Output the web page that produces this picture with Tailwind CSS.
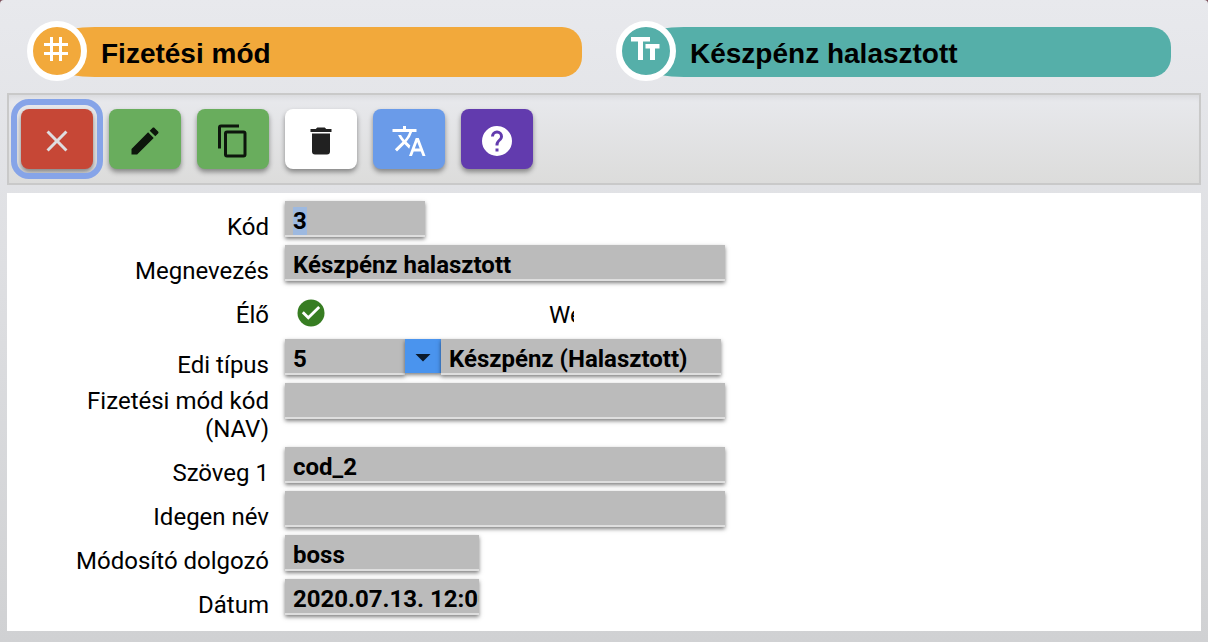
<!DOCTYPE html>
<html lang="hu">
  <head>
    <meta charset="UTF-8" />
    <meta name="viewport" content="width=device-width, initial-scale=1.0" />
    <script src="https://cdn.jsdelivr.net/npm/@tailwindcss/browser@4"></script>
    <title>Fizetési mód</title>
  </head>
  <body class="bg-[#7b4f5a] font-[Roboto,sans-serif] text-2xl/7 text-black">
    <div class="flex flex-col min-h-screen rounded-t-sm pb-[11px] bg-linear-to-b from-[#e8e9ed] to-[#d0d1d3]">
      <header class="grid grid-cols-2 gap-[34px] pl-[27px] pr-[37px] pt-[21px] pb-3 font-['Liberation_Sans',sans-serif]">
        <div class="grid">
          <h1 class="col-start-1 row-start-1 flex items-center h-[50px] mt-1.5 ml-1 pl-[70px] pt-1 bg-[#f2a93b] [border-radius:64px_20px_20px_64px/25px_20px_20px_25px] text-[28px] font-bold">
            Fizetési mód
          </h1>
          <div class="col-start-1 row-start-1 flex justify-center size-15 pt-2.5 pr-0.5 rounded-full border-6 border-white bg-[#f2a93b]">
            <svg class="size-6" viewBox="0 0 24 24" stroke="#fff" stroke-width="3" fill="none">
              <path d="M7.5 0V24M16.5 0V24M0 7.5H24M0 16.5H24" />
            </svg>
          </div>
        </div>
        <div class="grid">
          <h2 class="col-start-1 row-start-1 flex items-center h-[50px] mt-1.5 ml-1 pl-[70px] pt-1 bg-[#55afa9] [border-radius:64px_20px_20px_64px/25px_20px_20px_25px] text-[28px] font-bold">
            Készpénz halasztott
          </h2>
          <div class="col-start-1 row-start-1 flex justify-center size-15 pt-2.5 pr-0.5 rounded-full border-6 border-white bg-[#55afa9]">
            <svg class="w-[29px] h-[23px]" viewBox="0 0 29 23" fill="#fff">
              <path d="M0 0H19V4.5H12V23H7V4.5H0ZM14.5 7H28.5V11.5H24V23H19V11.5H14.5Z" />
            </svg>
          </div>
        </div>
      </header>

      <div class="flex gap-4 mx-[7px] px-3 py-3.5 border-2 border-[#c9c9c9] bg-linear-to-b from-[#e8e9ed] to-[#dcdcdb] shadow-[inset_0_6px_6px_-4px_rgba(0,0,0,0.08)]">
        <button type="button" aria-label="Bezárás" class="flex justify-center items-center w-18 h-15 pt-1 rounded-lg bg-[#c64736] text-[#dedee0] shadow-[0_3px_5px_rgba(0,0,0,0.4)] outline-6 outline-offset-4 outline-[#86a4e8]">
          <svg class="size-9" viewBox="0 0 24 24" fill="currentColor"><path d="M19 6.41 17.59 5 12 10.59 6.41 5 5 6.41 10.59 12 5 17.59 6.41 19 12 13.41 17.59 19 19 17.59 13.41 12Z" /></svg>
        </button>
        <button type="button" aria-label="Szerkesztés" class="flex justify-center items-center w-18 h-15 pt-1 rounded-lg bg-[#69ad5d] text-[#0d160c] shadow-[0_3px_5px_rgba(0,0,0,0.4)]">
          <svg class="size-9" viewBox="0 0 24 24" fill="currentColor"><path d="M20.71 7.04c.39-.39.39-1.04 0-1.41l-2.34-2.34c-.37-.39-1.02-.39-1.41 0l-1.84 1.83 3.75 3.75M3 17.25V21h3.75L17.81 9.93l-3.75-3.75L3 17.25Z" /></svg>
        </button>
        <button type="button" aria-label="Másolás" class="flex justify-center items-center w-18 h-15 pt-1 rounded-lg bg-[#69ad5d] text-[#0d160c] shadow-[0_3px_5px_rgba(0,0,0,0.4)]">
          <svg class="size-9" viewBox="0 0 24 24" fill="currentColor"><path d="M19 21H8V7h11m0-2H8a2 2 0 0 0-2 2v14a2 2 0 0 0 2 2h11a2 2 0 0 0 2-2V7a2 2 0 0 0-2-2m-3-4H4a2 2 0 0 0-2 2v14h2V3h12V1Z" /></svg>
        </button>
        <button type="button" aria-label="Törlés" class="flex justify-center items-center w-18 h-15 pt-1 rounded-lg bg-white text-[#212121] shadow-[0_3px_5px_rgba(0,0,0,0.4)]">
          <svg class="size-9" viewBox="0 0 24 24" fill="currentColor"><path d="M19 4h-3.5l-1-1h-5l-1 1H5v2h14M6 19a2 2 0 0 0 2 2h8a2 2 0 0 0 2-2V7H6v12Z" /></svg>
        </button>
        <button type="button" aria-label="Fordítás" class="flex justify-center items-center w-18 h-15 pt-1 rounded-lg bg-[#6a9be9] text-white shadow-[0_3px_5px_rgba(0,0,0,0.4)]">
          <svg class="size-9" viewBox="0 0 24 24" fill="currentColor"><path d="m12.87 15.07-2.54-2.51.03-.03A17.52 17.52 0 0 0 14.07 6H17V4h-7V2H8v2H1v2h11.17C11.5 7.92 10.44 9.75 9 11.35 8.07 10.32 7.3 9.19 6.69 8h-2c.73 1.63 1.73 3.17 2.98 4.56l-5.09 5.02L4 19l5-5 3.11 3.11.76-2.04M18.5 10h-2L12 22h2l1.12-3h4.75L21 22h2l-4.5-12m-2.62 7 1.62-4.33L19.12 17h-3.24Z" /></svg>
        </button>
        <button type="button" aria-label="Súgó" class="flex justify-center items-center w-18 h-15 pt-1 rounded-lg bg-[#623bae] text-white shadow-[0_3px_5px_rgba(0,0,0,0.4)]">
          <svg class="size-9" viewBox="0 0 24 24" fill="currentColor"><path d="m15.07 11.25-.9.92C13.45 12.89 13 13.5 13 15h-2v-.5c0-1.11.45-2.11 1.17-2.83l1.24-1.26c.37-.36.59-.86.59-1.41a2 2 0 0 0-2-2 2 2 0 0 0-2 2H8a4 4 0 0 1 4-4 4 4 0 0 1 4 4 3.2 3.2 0 0 1-.93 2.25M13 19h-2v-2h2M12 2A10 10 0 0 0 2 12a10 10 0 0 0 10 10 10 10 0 0 0 10-10c0-5.53-4.5-10-10-10Z" /></svg>
        </button>
      </div>

      <form class="flex flex-col grow gap-1 mt-2 mx-[7px] pt-2 pb-3 bg-white">
        <div class="flex items-start gap-4">
          <label for="kod" class="w-[262px] pt-3 text-right">Kód</label>
          <input id="kod" type="text" value="3" class="w-[140px] h-9 pl-2 pt-1.5 border-b-2 border-[#dedede] bg-[#bbb] font-bold shadow-[0_2px_4px_rgba(0,0,0,0.5)] outline-none selection:bg-[#9db9e0] selection:text-black" />
        </div>
        <div class="flex items-start gap-4">
          <label for="megnevezes" class="w-[262px] pt-3 text-right">Megnevezés</label>
          <input id="megnevezes" type="text" value="Készpénz halasztott" class="w-[440px] h-9 pl-2 pt-1.5 border-b-2 border-[#dedede] bg-[#bbb] font-bold shadow-[0_2px_4px_rgba(0,0,0,0.5)] outline-none" />
        </div>
        <div class="flex items-start gap-4 h-[46px]">
          <label for="elo" class="w-[262px] pt-3 text-right">Élő</label>
          <div class="grid w-[248px] pt-2.5 pl-3">
            <input id="elo" type="checkbox" checked class="peer col-start-1 row-start-1 appearance-none size-7 rounded-full border-2 border-[#377d22] checked:border-transparent" />
            <svg class="col-start-1 row-start-1 size-7 pointer-events-none invisible peer-checked:visible" viewBox="0 0 28 28" fill="none">
              <circle cx="14" cy="14" r="13.5" fill="#377d22" />
              <path d="M5.8 13.2 11.3 18.8 22.2 8" stroke="#fff" stroke-width="2.8" />
            </svg>
          </div>
          <span class="w-[25px] pt-3 overflow-hidden">We</span>
        </div>
        <div class="flex items-start gap-4">
          <label for="edi" class="w-[262px] pt-3 text-right">Edi típus</label>
          <div class="flex">
            <input id="edi" type="text" value="5" class="w-[120px] h-9 pl-2 pt-1.5 border-b-2 border-[#dedede] bg-[#bbb] font-bold shadow-[0_2px_4px_rgba(0,0,0,0.5)] outline-none" />
            <button type="button" aria-label="Edi típus választása" class="w-9 h-[34px] bg-[#4a94ee] text-[#0b1a2b] shadow-[0_2px_4px_rgba(0,0,0,0.5)]">
              <svg class="size-9" viewBox="0 0 24 24" fill="currentColor"><path d="m7 10 5 5 5-5H7Z" /></svg>
            </button>
            <input type="text" aria-label="Edi típus neve" value="Készpénz (Halasztott)" readonly class="w-[280px] h-9 pl-2 pt-1.5 border-b-2 border-[#dedede] bg-[#bbb] font-bold shadow-[0_2px_4px_rgba(0,0,0,0.5)] outline-none" />
          </div>
        </div>
        <div class="flex items-start gap-4">
          <label for="nav" class="w-[262px] pt-1 pl-10 text-right">Fizetési mód kód (NAV)</label>
          <input id="nav" type="text" class="w-[440px] h-9 pl-2 pt-1.5 border-b-2 border-[#dedede] bg-[#bbb] font-bold shadow-[0_2px_4px_rgba(0,0,0,0.5)] outline-none" />
        </div>
        <div class="flex items-start gap-4">
          <label for="szoveg" class="w-[262px] pt-3 text-right">Szöveg 1</label>
          <input id="szoveg" type="text" value="cod_2" class="w-[440px] h-9 pl-2 pt-1.5 border-b-2 border-[#dedede] bg-[#bbb] font-bold shadow-[0_2px_4px_rgba(0,0,0,0.5)] outline-none" />
        </div>
        <div class="flex items-start gap-4">
          <label for="idegen" class="w-[262px] pt-3 text-right">Idegen név</label>
          <input id="idegen" type="text" class="w-[440px] h-9 pl-2 pt-1.5 border-b-2 border-[#dedede] bg-[#bbb] font-bold shadow-[0_2px_4px_rgba(0,0,0,0.5)] outline-none" />
        </div>
        <div class="flex items-start gap-4">
          <label for="dolgozo" class="w-[262px] pt-3 text-right">Módosító dolgozó</label>
          <input id="dolgozo" type="text" value="boss" class="w-[194px] h-9 pl-2 pt-1.5 border-b-2 border-[#dedede] bg-[#bbb] font-bold shadow-[0_2px_4px_rgba(0,0,0,0.5)] outline-none" />
        </div>
        <div class="flex items-start gap-4">
          <label for="datum" class="w-[262px] pt-3 text-right">Dátum</label>
          <input id="datum" type="text" value="2020.07.13. 12:00" class="w-[194px] h-9 pl-2 pt-1.5 border-b-2 border-[#dedede] bg-[#bbb] font-bold shadow-[0_2px_4px_rgba(0,0,0,0.5)] outline-none" />
        </div>
      </form>
    </div>

    <script>
      document.getElementById("kod").select();
    </script>
  </body>
</html>
